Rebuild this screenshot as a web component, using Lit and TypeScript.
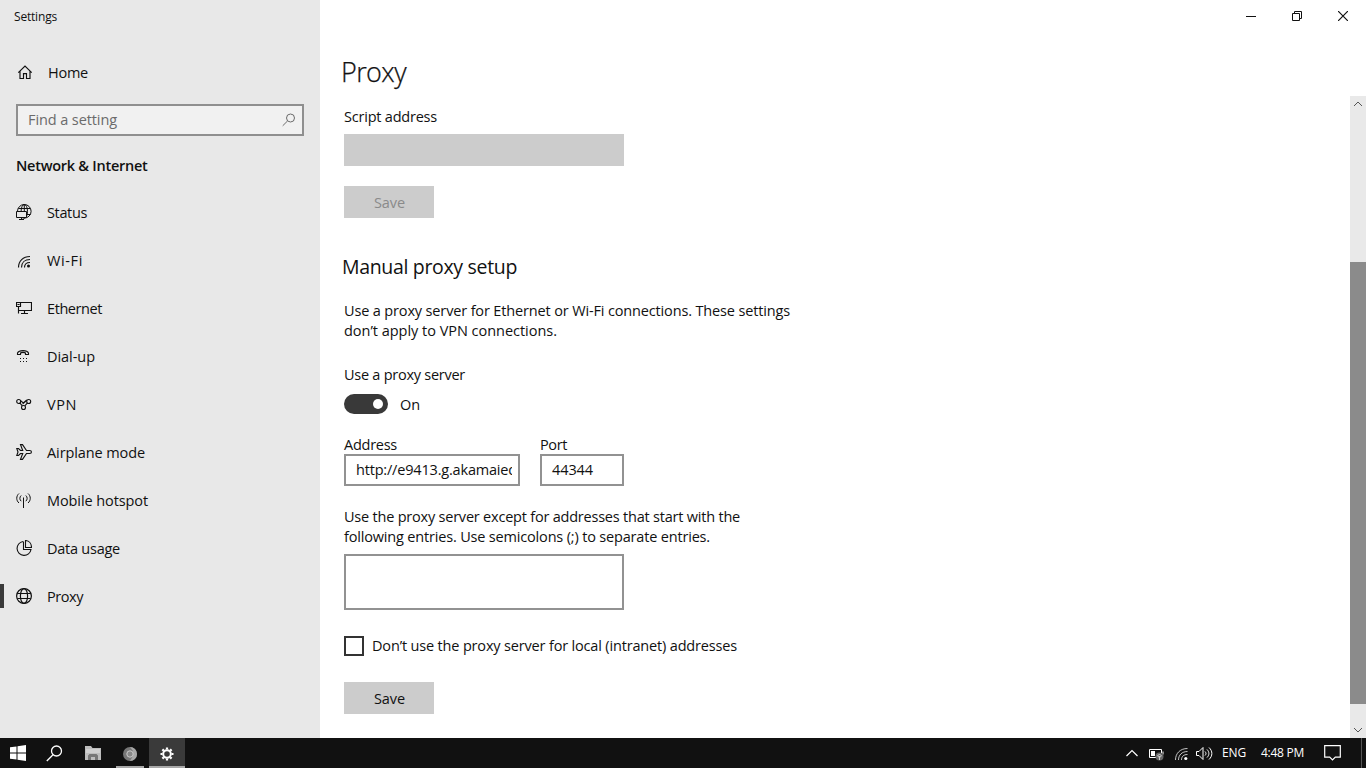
import { LitElement, html, svg, css } from "lit";
import { customElement, property } from "lit/decorators.js";

/** One line of text, tracked so that it spans the given number of pixels. */
@customElement("ui-text")
class UiText extends LitElement {
  @property({ type: Number }) span = 0;
  @property() text = "";
  static styles = css`
    :host { display: inline-block; white-space: pre; vertical-align: top; }
    .run { display: inline-block; }
  `;
  updated() {
    const run = this.renderRoot.querySelector(".run") as HTMLElement;
    run.style.letterSpacing = "0px";
    const natural = run.getBoundingClientRect().width;
    if (this.span) run.style.letterSpacing = `${(this.span - natural) / this.text.length}px`;
  }
  render() {
    return html`<span class="run">${this.text}</span>`;
  }
}

const t = (text: string, span: number) => html`<ui-text .text=${text} .span=${span}></ui-text>`;

const icons: Record<string, unknown> = {
  home: svg`<path stroke-width="1.150" d="M2.300 8.600 9 2l6.700 6.600M4 7.200v7.300h3.500v-4.900h3v4.900H14V7.200"/>`,
  status: svg`<circle cx="8.300" cy="7.300" r="6.800"/><ellipse cx="8.300" cy="7.300" rx="3.200" ry="6.800"/><path d="M2.300 4.500h12M9 10.500h5.500M8.300 .5v7"/><path fill="#e8e8e8" d="M.5 7.500h10v6H.5z"/><path d="M5.500 13.500v2M3 15.500h5"/>`,
  wifi: svg`<path stroke-width="1.150" d="M2.500 15.500C2.500 9 7 4.500 14 4.500M5.500 15.500c0-5 3.500-8 8.500-8M8.500 15.500c0-3 2-5 5.500-5"/><circle class="solid" cx="12.500" cy="14" r="1.500"/>`,
  ethernet: svg`<path stroke-width="1.150" d="M4.500 2.500h11v8h-13M8.500 10.500v3M5 13.500h7M.5 2.500h4v4h-4zM2.500 6.500v7M1.500 4.500h2"/>`,
  dialup: svg`<path stroke-width="1.100" d="M1.500 6.500V5C3 1.800 11 1.800 12.500 5v1.500h-3V5c-1-.8-4-.8-5 0v1.500z"/><path class="solid" d="M4 10h1v1H4zM7 10h1v1H7zM10 10h1v1h-1zM4 13h1v1H4zM7 13h1v1H7zM10 13h1v1h-1z"/>`,
  vpn: svg`<g stroke-width="1.100"><circle cx="2.700" cy="5.500" r="2"/><circle cx="12.700" cy="5.500" r="2"/><circle cx="7.500" cy="11.500" r="2"/><path d="M4 7.200 6.300 9.800M11.300 7.200 8.800 9.800M4.300 4.300l3 2.700 3.500-3M6.500 8l4-3.500"/></g>`,
  airplane: svg`<path stroke-width="1.150" d="M.8 4.500h1.700L4.500 6.500H6.700L4.500.6h2L10.500 6.500h3.200c2.300 0 2.300 3 0 3h-3.200L6.500 15.400h-2L6.700 9.500H4.500l-2 2H.8L2 8z"/>`,
  hotspot: svg`<path d="M3 1.500C0 4 0 8.500 3 11M12 1.500c3 2.500 3 7 0 9.500M5.200 3.500c-1.800 1.500-1.800 4.200 0 5.700M9.800 3.500c1.800 1.500 1.800 4.200 0 5.700M7.500 5.500V16"/>`,
  data: svg`<path stroke-width="1.100" d="M7 1.500a7 7 0 1 0 8 8H7.500V1.500M9.500.5v7h6C15.500 3.500 13 .7 9.500.5z"/>`,
  globe: svg`<g stroke-width="1.200"><circle cx="8" cy="8" r="7.400"/><ellipse cx="8" cy="8" rx="3.600" ry="7.400"/><path d="M1.300 5.500h13.400M1.300 10.500h13.400"/></g>`,
};

const NAV: [string, string, number, boolean?][] = [
  ["status", "Status", 40],
  ["wifi", "Wi-Fi", 36],
  ["ethernet", "Ethernet", 55],
  ["dialup", "Dial-up", 48],
  ["vpn", "VPN", 30],
  ["airplane", "Airplane mode", 98],
  ["hotspot", "Mobile hotspot", 101],
  ["data", "Data usage", 73],
  ["globe", "Proxy", 36, true],
];

@customElement("app-root")
class AppRoot extends LitElement {
  static styles = css`
    :host {
      display: flex; flex-direction: column; width: 1366px; height: 768px; overflow: hidden;
      font: 14.5px/20px "Open Sans", "Noto Sans", sans-serif; color: #111; background: #fff;
    }
    * { box-sizing: border-box; }
    svg { display: block; fill: none; stroke: currentColor; flex: none; }
    .solid { fill: currentColor; stroke: none; }
    .window { display: flex; height: 738px; }
    .side { width: 320px; background: #e8e8e8; }
    .caption { height: 32px; padding: 7px 0 0 14px; font-size: 12px; }
    .home { display: flex; align-items: center; height: 56px; margin-top: 16px; padding: 0 0 8px 16px; }
    .home svg { margin-right: 15px; }
    .home ui-text, .row ui-text { padding-top: 2px; }
    .search { display: flex; align-items: center; justify-content: space-between; width: 288px; height: 32px; margin: 0 16px; padding: 0 6px 0 10px; border: 2px solid #8f8f8f; background: #f1f1f1; color: #6b6b6b; }
    h2 { margin: 20px 0 12px 16px; font-size: 14.5px; line-height: 20px; font-weight: 600; }
    .row { display: flex; align-items: center; height: 48px; padding-left: 16px; }
    .row svg { margin-right: 15px; }
    .row.on::before { content: ""; width: 4px; height: 24px; margin: 0 12px 0 -16px; background: #3a3a3a; }
    .main { flex: 1; display: flex; flex-direction: column; }
    .controls { display: flex; justify-content: flex-end; height: 32px; }
    .controls span { width: 46px; display: grid; place-items: center; }
    h1 { margin: 0; height: 64px; padding: 20px 0 0 21px; font-size: 27px; line-height: 40px; font-weight: 300; -webkit-text-stroke: 0.25px #111; }
    .body { display: flex; justify-content: space-between; height: 642px; }
    .content { display: flex; flex-direction: column; align-items: flex-start; padding: 11px 0 0 24px; }
    .disabled { width: 280px; height: 32px; margin: 7px 0 20px; background: #ccc; }
    .btn { display: grid; place-items: center; width: 90px; height: 32px; background: #ccc; padding: 1px 0 0 1px; }
    .btn.off { color: #8a8a8a; }
    h3 { margin: 35px 0 20px -2px; font-size: 19.5px; line-height: 28px; font-weight: 400; }
    .line { height: 20px; }
    .gap { margin-bottom: 24px; }
    .toggle { display: flex; align-items: center; gap: 12px; height: 20px; margin: 9px 0 21px; }
    .toggle ui-text { padding-top: 2px; }
    .pill { width: 44px; height: 20px; border-radius: 10px; background: #393939; padding: 5px 5px 0 29px; }
    .pill i { display: block; width: 10px; height: 10px; border-radius: 5px; background: #fff; }
    .fields { display: flex; gap: 20px; margin-bottom: 21px; }
    .box { border: 2px solid #929292; height: 32px; padding: 4px 0 0 10px; margin-top: -1px; }
    .clip { overflow: hidden; height: 24px; margin-right: 6px; }
    .addr { width: 176px; }
    .port { width: 84px; }
    .area { width: 280px; height: 56px; border: 2px solid #929292; margin: 7px 0 26px; }
    .check { display: flex; gap: 8px; height: 20px; margin-bottom: 26px; }
    .check i { width: 20px; height: 20px; border: 2px solid #333; }
    .scroll { width: 16px; display: flex; flex-direction: column; background: #e9e9e9; color: #555; }
    .thumb { height: 442px; margin: 150px 0 18px; background: #8b8b8b; }
    .task { display: flex; justify-content: space-between; height: 30px; background: #111; color: #fff; font-size: 12px; }
    .apps, .tray { display: flex; }
    .app { display: grid; place-items: center; width: 36px; height: 30px; margin-right: 1px; }
    .app:nth-child(2) { width: 37px; padding-right: 2px; }
    .open { align-content: end; gap: 5px; }
    .open::after { content: ""; width: 28px; height: 2px; background: #a8a8a8; }
    .active { background: #3a3a3a; }
    .active::after { width: 36px; }
    .tray svg, .tray ui-text { margin-top: 5px; }
    .eng { margin-left: 2px; }
    .time { margin: 0 20px 0 15px; }
    .peek { width: 1px; height: 30px; margin: 0 4px 0 20px; background: #555; }
  `;

  icon(name: string) {
    return html`<svg width="16" height="16" viewBox="0 0 16 16">${icons[name]}</svg>`;
  }

  render() {
    return html`
      <div class="window">
        <aside class="side">
          <div class="caption">${t("Settings", 43)}</div>
          <div class="home"><svg width="17" height="16" viewBox="0 0 17 16">${icons.home}</svg>${t("Home", 40)}</div>
          <div class="search">${t("Find a setting", 89)}
            <svg width="14" height="14" viewBox="0 0 14 14"><circle cx="8.500" cy="5" r="4"/><path d="M5.500 8 .7 12.800"/></svg>
          </div>
          <h2>${t("Network & Internet", 131.5)}</h2>
          ${NAV.map(([ic, name, w, on]) => html`<div class="row ${on ? "on" : ""}">${this.icon(ic)}${t(name, w)}</div>`)}
        </aside>
        <main class="main">
          <div class="controls">
            <span><svg width="10" height="10"><path d="M0 5.500h10"/></svg></span>
            <span><svg width="10" height="10"><path d="M.5 2.500h7v7h-7zM2.500 2.500v-2h7v7h-2"/></svg></span>
            <span><svg width="10" height="10"><path stroke-width="1.200" d="M0 0 10 10M10 0 0 10"/></svg></span>
          </div>
          <h1>${t("Proxy", 65)}</h1>
          <div class="body">
            <div class="content">
              <div class="line">${t("Script address", 93)}</div>
              <div class="disabled"></div>
              <div class="btn off">${t("Save", 31)}</div>
              <h3>${t("Manual proxy setup", 175)}</h3>
              <div class="line">${t("Use a proxy server for Ethernet or Wi-Fi connections. These settings", 446)}</div>
              <div class="line gap">${t("don’t apply to VPN connections.", 213)}</div>
              <div class="line">${t("Use a proxy server", 121)}</div>
              <div class="toggle"><div class="pill"><i></i></div>${t("On", 20)}</div>
              <div class="fields">
                <div><div class="line">${t("Address", 53)}</div>
                  <div class="box addr"><div class="clip">${t("http://e9413.g.akamaied", 161)}</div></div></div>
                <div><div class="line">${t("Port", 27)}</div>
                  <div class="box port">${t("44344", 41)}</div></div>
              </div>
              <div class="line">${t("Use the proxy server except for addresses that start with the", 396)}</div>
              <div class="line">${t("following entries. Use semicolons (;) to separate entries.", 366)}</div>
              <div class="area"></div>
              <div class="check"><i></i>${t("Don’t use the proxy server for local (intranet) addresses", 365)}</div>
              <div class="btn">${t("Save", 31)}</div>
            </div>
            <div class="scroll">
              <svg width="16" height="16"><path d="m4 10 4-4 4 4"/></svg>
              <div class="thumb"></div>
              <svg width="16" height="16"><path d="m4 6 4 4 4-4"/></svg>
            </div>
          </div>
        </main>
      </div>
      <footer class="task">
        <div class="apps">
          <div class="app"><svg width="16" height="16"><path class="solid" d="M0 2.300 6.500 1.400V7.500H0zM7.500 1.200 16 0v7.500H7.500zM0 8.500h6.500v6.100L0 13.700zM7.500 8.500H16V16l-8.500-1.200z"/></svg></div>
          <div class="app"><svg width="17" height="17" stroke-width="1.300"><circle cx="10.500" cy="6" r="5"/><path d="M7 9.800.8 16"/></svg></div>
          <div class="app"><svg width="17" height="15"><path fill="#bdbdbd" stroke="none" d="M0 0h6l1.500 2H16v12H0z"/><path fill="#d0d0d0" stroke="none" d="M1 3h14v4H1z"/><path fill="#777" stroke="none" d="M3 14V9.500L4.500 8h7L13 9.500V14h-3v-3H6v3z"/></svg></div>
          <div class="app open"><svg width="14" height="14" viewBox="0 0 14 14"><circle cx="7" cy="7" r="7" fill="#777" stroke="none"/><path fill="#a8a8a8" stroke="none" d="M7 0a7 7 0 0 1 0 14l3-5V4z"/><circle cx="7" cy="7" r="3.200" fill="#888" stroke="#ccc"/></svg></div>
          <div class="app open active"><svg width="14" height="14" viewBox="-7 -7 14 14"><circle r="3.800" stroke-width="2"/><path stroke-width="2.200" d="M0-6.500v2M0 4.500v2M-6.500 0h2M4.500 0h2M-4.600-4.600l1.400 1.400M3.200 3.200l1.400 1.400M-4.600 4.600l1.400-1.400M3.200-3.200l1.400-1.400"/></svg></div>
        </div>
        <div class="tray">
          <svg width="96" height="20" viewBox="1124 743 96 20">
            <path stroke-width="1.200" d="m1126.500 756 5.500-5.500 5.500 5.500"/>
            <path d="M1149.500 749.500h12v8h-12zM1163 751.500v3"/><path class="solid" d="M1151 751h4v5h-4z"/>
            <circle cx="1159.500" cy="756.500" r="4" fill="#666" stroke="none"/><path stroke="#ccc" d="M1159.500 756v4M1157.500 756l2-2 2 2-2 1.500z"/>
            <g transform="translate(1173 744)"><path opacity=".75" d="M2.500 16C2.500 9.500 7 4.500 14.500 4.500M5.500 16c0-5 3.500-8.500 9-8.500M8.500 16c0-3.500 2-5.500 6-5.500"/><circle class="solid" cx="12.800" cy="14.500" r="1.600"/></g>
            <path d="M1196.500 751.500h2.500l4-4v12l-4-4h-2.500zM1205 751.500c1.300 1.500 1.300 2.500 0 4M1207 749.500c2.500 2.500 2.500 5.500 0 8M1209 747.500c3.800 3.500 3.800 8.500 0 12"/>
          </svg>
          <span class="eng">${t("ENG", 24)}</span><span class="time">${t("4:48 PM", 43)}</span>
          <svg width="17" height="18"><path stroke-width="1.200" d="M.7 2.700h15.600v11.500h-5L8.500 17l-2.800-2.800h-5z"/></svg>
          <div class="peek"></div>
        </div>
      </footer>
    `;
  }
}
